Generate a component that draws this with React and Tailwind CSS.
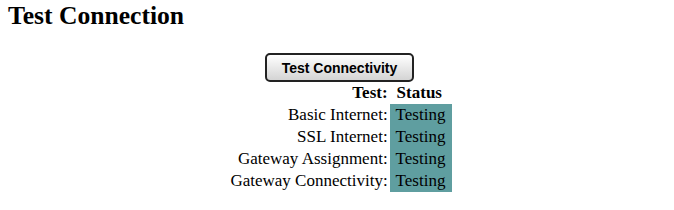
const rows = ['Basic Internet:', 'SSL Internet:', 'Gateway Assignment:', 'Gateway Connectivity:']

export default function App() {
  return (
    <div className="w-[674px] h-[210px] bg-white text-black" style={{ fontFamily: '"Liberation Serif", "Times New Roman", serif' }}>
      <h2 className="pt-[2px] pl-[8px] text-[25.6px] leading-[28px] font-bold">Test Connection</h2>

      <div className="flex flex-col items-center pl-[8px] mt-[23px]">
        <button
          type="button"
          className="w-[149px] h-[29px] mr-[3px] rounded-[5px] border-2 border-[#222] bg-gradient-to-b from-white to-[#d4d4d4] text-[14px] font-bold leading-none"
          style={{ fontFamily: '"Liberation Sans", Arial, sans-serif' }}
        >
          Test Connectivity
        </button>

        <div className="grid grid-cols-[auto_62px] gap-x-[2px] text-[17px] leading-[22px]">
          <div className="text-right font-bold">Test:</div>
          <div className="pl-[7px] font-bold">Status</div>
          {rows.map((r) => (
            <div key={r} className="contents">
              <div className="text-right">{r}</div>
              <div className="pl-[6px] bg-[#5f9ea0]">Testing</div>
            </div>
          ))}
        </div>
      </div>
    </div>
  )
}
